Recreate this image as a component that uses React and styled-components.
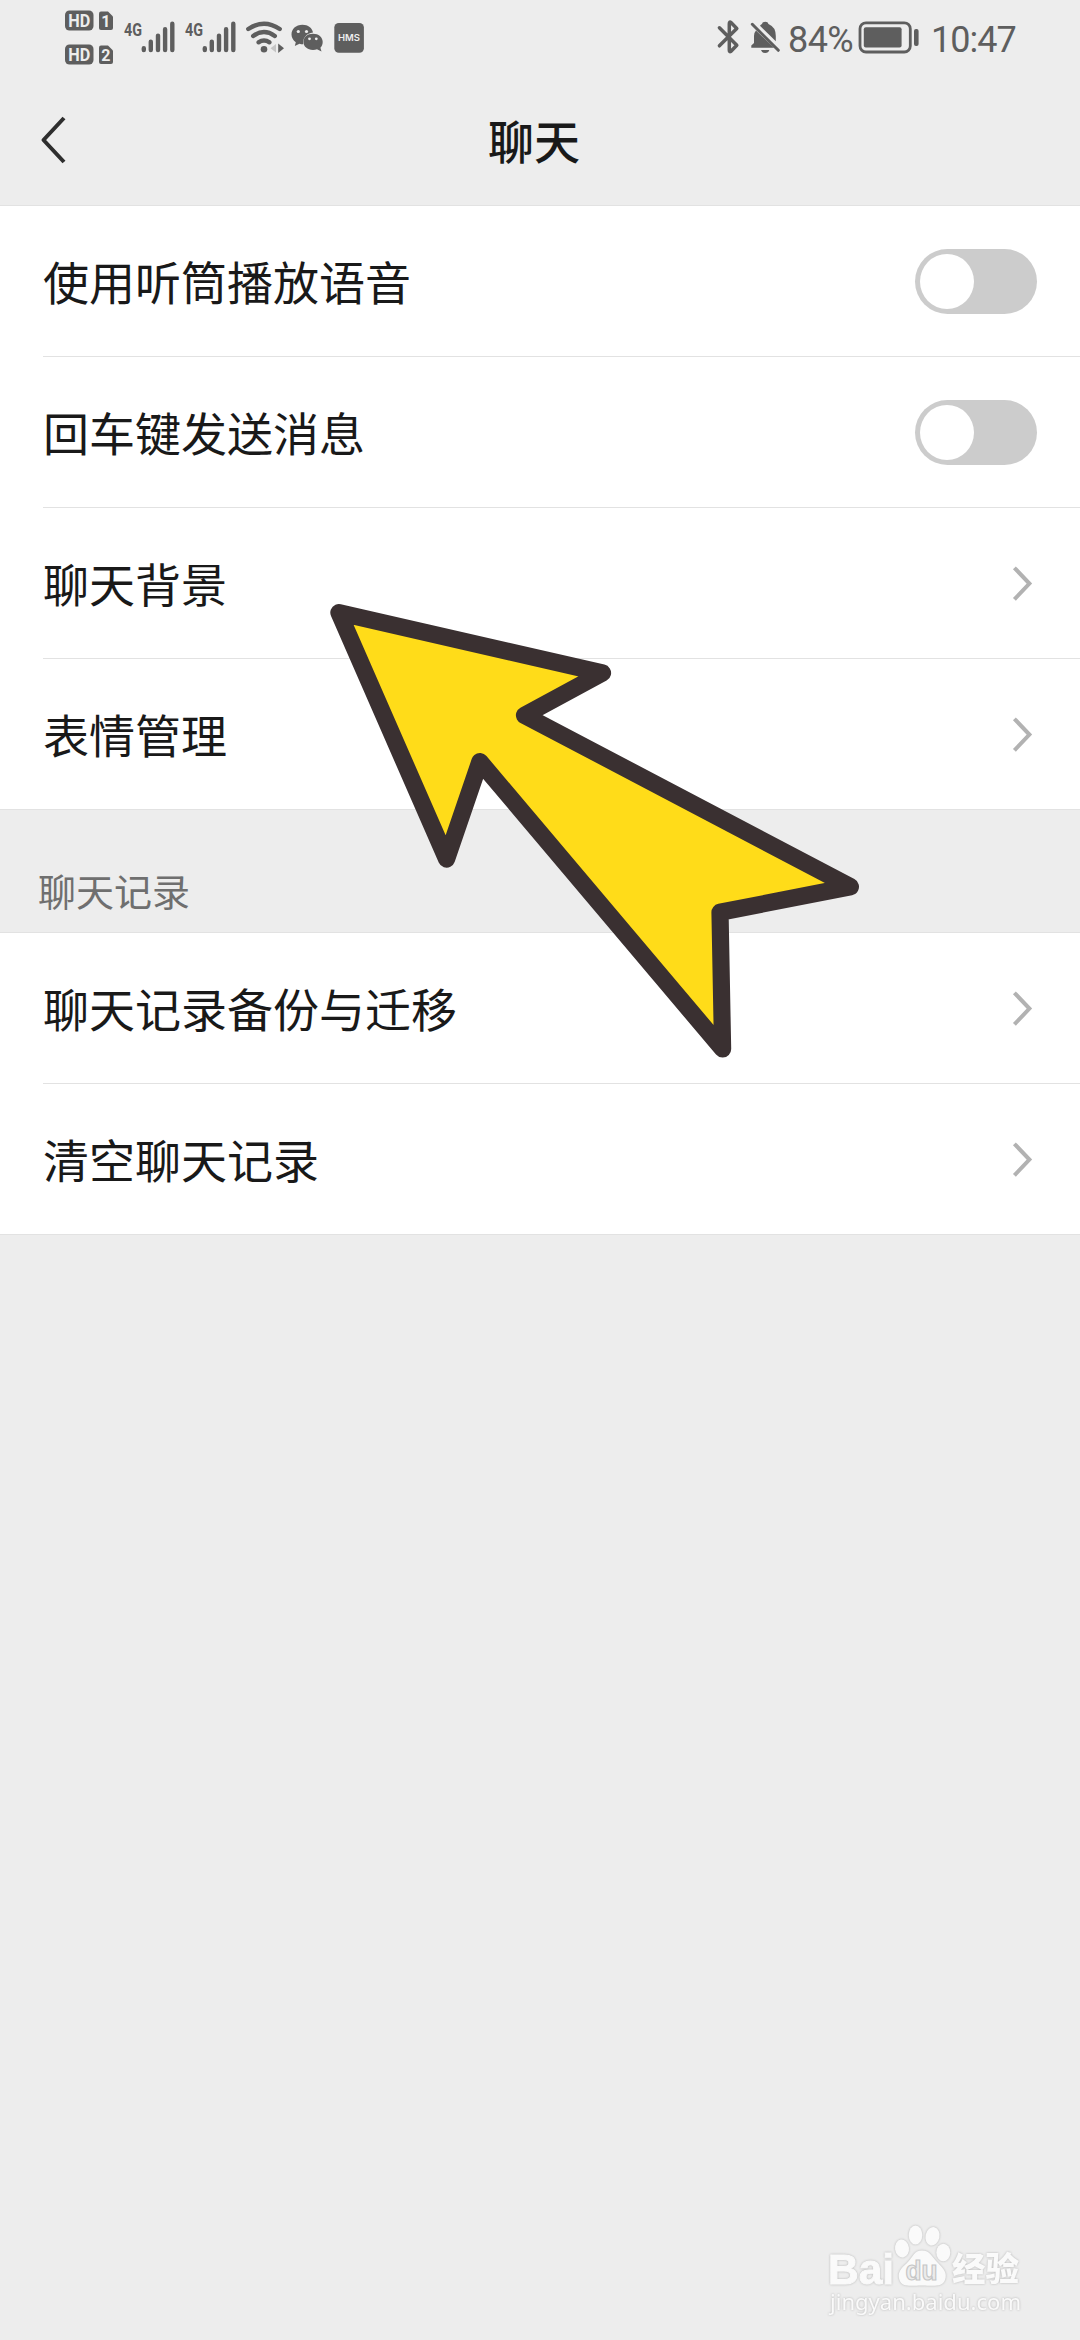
import React from "react";
import styled, { createGlobalStyle } from "styled-components";

const INK = "#5e5e5e";
const CJK = `"Noto Sans CJK SC", "Noto Sans", sans-serif`;

const GlobalStyle = createGlobalStyle`
  * { box-sizing: border-box; }
  html, body { margin: 0; padding: 0; background: #ededed; }
`;

const Screen = styled.div`
  position: relative;
  width: 1080px;
  height: 2340px;
  display: flex;
  flex-direction: column;
  overflow: hidden;
  background: #ededed;
  color: #191919;
  font-family: ${CJK};
`;

const StatusBar = styled.header`
  display: flex;
  justify-content: space-between;
  height: 75px;
  padding: 0 66px 0 65px;
`;

const StatusGroup = styled.div`
  display: flex;
  align-items: center;
  height: 75px;
`;

const Icon = styled.svg`
  display: block;
  flex: none;
  overflow: visible;
  margin-left: ${(p) => p.$gap || 0}px;
`;

const StatusText = styled.span`
  display: block;
  width: ${(p) => p.$w}px;
  margin-left: ${(p) => p.$gap}px;
  font: 400 36px/36px Roboto, sans-serif;
  letter-spacing: ${(p) => p.$track}px;
  color: ${INK};
  white-space: nowrap;
  padding-top: 4px;
`;

const NavBar = styled.nav`
  display: grid;
  grid-template-columns: 120px 1fr 120px;
  align-items: center;
  height: 131px;
  border-bottom: 1px solid #e2e2e2;
`;

const BackButton = styled.button`
  display: flex;
  height: 130px;
  padding: 0 0 0 40px;
  align-items: center;
  border: 0;
  background: none;
`;

const Title = styled.h1`
  margin: 0;
  padding: 0 12px 2px 0;
  text-align: center;
  font-size: 46px;
  line-height: 60px;
  font-weight: 500;
`;

const List = styled.section`
  display: flex;
  flex-direction: column;
  background: #fff;
  padding-left: 43px;
  border-bottom: 1px solid #e2e2e2;
`;

const Row = styled.div`
  display: flex;
  align-items: center;
  justify-content: space-between;
  height: 151px;
  padding-right: ${(p) => p.$right}px;
  border-bottom: 1px solid #e2e2e2;
  &:last-child { height: 150px; border-bottom: 0; }
`;

const RowLabel = styled.span`
  font-size: 46px;
  line-height: 60px;
  padding-bottom: 2px;
  white-space: nowrap;
`;

const SwitchTrack = styled.span`
  display: flex;
  align-items: center;
  width: 122px;
  height: 65px;
  padding-left: 5px;
  border-radius: 33px;
  background: #cccccc;
`;

const SwitchKnob = styled.span`
  width: 54px;
  height: 55px;
  border-radius: 50%;
  background: #fff;
`;

const SectionLabel = styled.div`
  height: 123px;
  padding: 52px 0 0 38px;
  font-size: 38px;
  line-height: 56px;
  color: #6f6f6f;
  border-bottom: 1px solid #e2e2e2;
`;

const Pointer = styled.svg`
  position: absolute;
  left: 320px;
  top: 590px;
`;

const Watermark = styled.svg`
  position: absolute;
  left: 820px;
  top: 2215px;
`;

const WatermarkInk = styled.g`
  fill: #fafafa;
  filter: drop-shadow(0 0 1px #b4b4b4);
`;

const HdBadges = () => (
  <Icon width="49" height="75" viewBox="65 0 49 75">
    {[{ y: 10.5, n: "1" }, { y: 44.5, n: "2" }].map(({ y, n }) => (
      <g key={n}>
        <rect x="65" y={y} width="28.5" height="20" rx="4.5" fill={INK} />
        <text x="79.3" y={y + 16.2} textAnchor="middle" textLength="22" lengthAdjust="spacingAndGlyphs" fontFamily="Roboto, sans-serif" fontWeight="700" fontSize="17.5" fill="#ededed">HD</text>
        <path d={`M101 ${y + 1}H108L113 ${y + 6}V${y + 17.5}Q113 ${y + 19.5} 111 ${y + 19.5}H101Q99 ${y + 19.5} 99 ${y + 17.5}V${y + 3}Q99 ${y + 1} 101 ${y + 1}Z`} fill={INK} />
        <text x="105.8" y={y + 16.8} textAnchor="middle" fontFamily="Roboto, sans-serif" fontWeight="700" fontSize="16" fill="#ededed">{n}</text>
      </g>
    ))}
  </Icon>
);

const Signal = ({ gap }) => (
  <Icon $gap={gap} width="51" height="75" viewBox="124 0 51 75">
    <text x="124" y="35.5" textLength="18" lengthAdjust="spacingAndGlyphs" fontFamily="Roboto, sans-serif" fontWeight="700" fontSize="19" fill={INK}>4G</text>
    <g stroke={INK} strokeWidth="4.4" strokeLinecap="round">
      <path d="M143.8 48.3V50M150.8 41.8V50M158 35.6V50M165.1 29.2V50M172.3 23.8V50" />
    </g>
  </Icon>
);

const Wifi = () => (
  <Icon $gap={9} width="40" height="75" viewBox="244 0 40 75">
    <g fill="none" stroke={INK} strokeWidth="4.4" strokeLinecap="round">
      <path d="M247.3 29Q263 18.5 278.7 29" />
      <path d="M252.2 36Q263 28.2 273.8 36" />
      <path d="M257.5 42.3Q263 38.6 268.5 42.3" />
    </g>
    <circle cx="263" cy="49.3" r="3.3" fill={INK} />
    <path d="M275 44V52.5L269.5 48.3Z" fill="#c5c5c5" />
    <path d="M277.2 43.5V53L283 48.3Z" fill={INK} />
  </Icon>
);

const WeChat = () => (
  <Icon $gap={6} width="32" height="75" viewBox="290 0 32 75">
    <path d="M301.5 24.7C294.8 24.7 290.5 29 290.5 34.5C290.5 37.7 292.2 40.4 294.8 42.2L293.8 46L298.5 43.7Q300 44.2 302.2 44.2A11 10 0 0 1 312 32.5C311.3 28 307 24.7 301.5 24.7Z" fill={INK} />
    <path d="M312 33.7C306.3 33.7 302.4 37.2 302.4 41.8C302.4 46.5 306.4 50 312 50Q314.2 50 316 49.3L320.5 51.5L319.4 47.8C321 46.2 321.7 44.2 321.7 41.8C321.7 37.2 317.6 33.7 312 33.7Z" fill={INK} />
    <g fill="#ededed">
      <circle cx="297.3" cy="31.5" r="1.6" /><circle cx="305.5" cy="31.5" r="1.6" />
      <circle cx="308.5" cy="38.8" r="1.4" /><circle cx="315.3" cy="38.8" r="1.4" />
    </g>
  </Icon>
);

const Hms = () => (
  <Icon $gap={11} width="30" height="75" viewBox="333 0 30 75">
    <rect x="333.3" y="23" width="29.6" height="29.7" rx="4.5" fill={INK} />
    <text x="348" y="41.4" textAnchor="middle" textLength="22" lengthAdjust="spacingAndGlyphs" fontFamily="Inter, sans-serif" fontWeight="600" fontSize="9.5" fill="#ededed">HMS</text>
  </Icon>
);

const Bluetooth = () => (
  <Icon width="22" height="75" viewBox="717 0 22 75">
    <path d="M719.4 27.8L736.8 45.2L731 51.2Q729.3 52.4 729.3 50.2V23.8Q729.3 21 731 22.6L736.8 28.4L719.4 45.8" fill="none" stroke={INK} strokeWidth="3.5" strokeLinejoin="round" strokeLinecap="round" />
  </Icon>
);

const BellOff = () => (
  <Icon $gap={12} width="30" height="75" viewBox="751 0 30 75">
    <path d="M756 30.5L774 47.8H751.3V45.5L754 43V36Q754 32.5 756 30.5Z" fill={INK} />
    <path d="M760 25.8Q760.7 24.5 762 24Q762.5 21.7 765.3 21.7Q768 21.7 768.5 24Q775.8 27 775.8 36V41.2Z" fill={INK} />
    <path d="M761 50H769.3Q768.5 53 765.2 53Q762 53 761 50Z" fill={INK} />
    <path d="M752.3 24.3L778.3 50.3" stroke={INK} strokeWidth="3" strokeLinecap="round" />
  </Icon>
);

const Battery = () => (
  <Icon $gap={5} width="61" height="75" viewBox="858 0 61 75">
    <rect x="860" y="22.8" width="50.3" height="29.2" rx="6" fill="none" stroke={INK} strokeWidth="2.8" />
    <rect x="863.8" y="27.2" width="37.8" height="20.2" rx="2" fill={INK} />
    <rect x="914" y="29" width="4.6" height="17" rx="2" fill={INK} />
  </Icon>
);

const Chevron = () => (
  <Icon width="20" height="36" viewBox="0 0 20 36">
    <path d="M1.8 2.2L16.8 18L1.8 33.8" transform="translate(0.6 0.6)" fill="none" stroke="#b2b2b2" strokeWidth="4" />
  </Icon>
);

const Switch = () => <SwitchTrack><SwitchKnob /></SwitchTrack>;

const SettingRow = ({ label, toggle }) => (
  <Row $right={toggle ? 43 : 48}>
    <RowLabel>{label}</RowLabel>
    {toggle ? <Switch /> : <Chevron />}
  </Row>
);

const YellowArrow = () => (
  <Pointer width="560" height="490" viewBox="320 590 560 490">
    <path d="M338.9 612.6L602.5 673L524.5 715.3L850.4 886.7L720 912.3L722.6 1049L479.9 761.6L446.6 859Z" fill="#ffdc19" stroke="#3a3031" strokeWidth="17.2" strokeLinejoin="round" />
  </Pointer>
);

const BaiduMark = () => (
  <Watermark width="220" height="110" viewBox="820 2215 220 110">
    <WatermarkInk>
      <text x="828" y="2283.5" textLength="66" lengthAdjust="spacingAndGlyphs" fontFamily='"Liberation Sans", sans-serif' fontWeight="700" fontSize="43" stroke="#fafafa" strokeWidth="1">Bai</text>
      <ellipse cx="902" cy="2248.5" rx="7" ry="9" transform="rotate(-8 902 2248.5)" />
      <ellipse cx="915.5" cy="2235" rx="6.8" ry="9.5" />
      <ellipse cx="932.5" cy="2236.3" rx="7" ry="9.3" transform="rotate(12 932.5 2236.3)" />
      <ellipse cx="943.3" cy="2252.5" rx="7" ry="8.8" />
      <path d="M922 2250.5C930 2250.5 932 2257 938 2263C944 2269 947.5 2273 945 2280C942 2287 935 2286 922 2285.5C909 2286 902 2287 899.5 2280C897 2273 901 2268 907 2263C913 2257 914 2250.5 922 2250.5Z" />
      <text x="952" y="2281" textLength="67" lengthAdjust="spacingAndGlyphs" fontFamily='"Noto Sans CJK SC", sans-serif' fontWeight="900" fontSize="33">经验</text>
      <text x="830" y="2310" textLength="191" lengthAdjust="spacingAndGlyphs" fontFamily='"Noto Sans", sans-serif' fontSize="22.5">jingyan.baidu.com</text>
    </WatermarkInk>
    <text x="905.5" y="2279.5" textLength="32" lengthAdjust="spacingAndGlyphs" fontFamily='"Liberation Sans", sans-serif' fontWeight="700" fontSize="27" fill="#ececec" stroke="#c6c6c6" strokeWidth="1.2">du</text>
  </Watermark>
);

export default function App() {
  return (
    <Screen>
      <GlobalStyle />
      <StatusBar>
        <StatusGroup>
          <HdBadges />
          <Signal gap={10} />
          <Signal gap={10} />
          <Wifi />
          <WeChat />
          <Hms />
        </StatusGroup>
        <StatusGroup>
          <Bluetooth />
          <BellOff />
          <StatusText $w={65} $gap={7} $track={-0.6}>84%</StatusText>
          <Battery />
          <StatusText $w={83} $gap={12} $track={-1}>10:47</StatusText>
        </StatusGroup>
      </StatusBar>
      <NavBar>
        <BackButton aria-label="返回">
          <Icon width="26" height="48" viewBox="0 0 26 48">
            <path d="M24 2L3.5 24L24 46" fill="none" stroke="#2e2e2e" strokeWidth="4" strokeLinejoin="round" />
          </Icon>
        </BackButton>
        <Title>聊天</Title>
      </NavBar>
      <List>
        <SettingRow label="使用听筒播放语音" toggle />
        <SettingRow label="回车键发送消息" toggle />
        <SettingRow label="聊天背景" />
        <SettingRow label="表情管理" />
      </List>
      <SectionLabel>聊天记录</SectionLabel>
      <List>
        <SettingRow label="聊天记录备份与迁移" />
        <SettingRow label="清空聊天记录" />
      </List>
      <YellowArrow />
      <BaiduMark />
    </Screen>
  );
}
